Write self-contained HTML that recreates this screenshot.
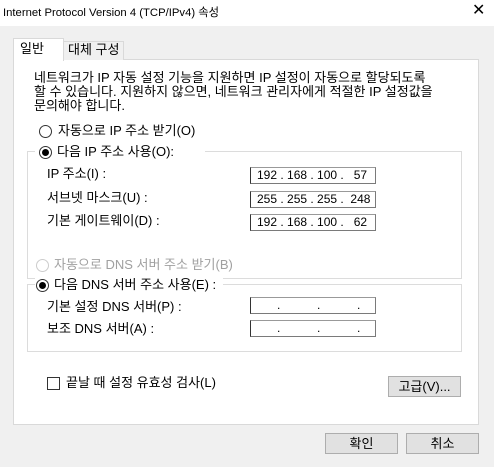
<!DOCTYPE html>
<html><head><meta charset="utf-8"><style>
*{box-sizing:border-box;margin:0;padding:0}
body{width:494px;height:467px;background:#f0f0f0;font-family:"Liberation Sans","Noto Sans CJK KR",sans-serif;font-size:13px;color:#000;position:relative;overflow:hidden}
.a{position:absolute;white-space:nowrap;line-height:14px}
.title{position:absolute;left:0;top:0;width:494px;height:26px;background:#fff}
.panel{position:absolute;left:13px;top:59px;width:466px;height:366px;background:#fff;border:1px solid #d9d9d9}
.grp{position:absolute;border:1px solid #dcdcdc}
.inp{position:absolute;width:126px;height:17px;background:#fff;border:1px solid #7a7a7a;border-left-color:#333;border-top-color:#999;font-size:12px;line-height:15px;padding-left:6px}
.rad{position:absolute;width:13px;height:13px;border:1px solid #333;border-radius:50%;background:#fff}
.rad.on::after{content:"";position:absolute;left:2px;top:2px;width:7px;height:7px;border-radius:50%;background:#000}
.btn{position:absolute;height:21px;background:#e1e1e1;border:1px solid #adadad;text-align:center;line-height:19px}
</style></head><body>
<div class="title"></div>
<div class="a" style="left:3px;top:6px;font-size:11.3px">Internet Protocol Version 4 (TCP/IPv4) 속성</div>
<div class="a" style="left:472px;top:4px;font-size:16px;font-weight:300">✕</div>
<div class="panel"></div>
<div class="a" style="left:63px;top:41px;width:61px;height:19px;background:#f0f0f0;border:1px solid #d9d9d9;border-bottom:none"></div>
<div class="a" style="left:68px;top:43px">대체 구성</div>
<div class="a" style="left:13px;top:38px;width:51px;height:23px;background:#fff;border:1px solid #d9d9d9;border-bottom:none"></div>
<div class="a" style="left:20px;top:42px">일반</div>
<div class="a" style="left:34px;top:71px;line-height:14px">네트워크가 IP 자동 설정 기능을 지원하면 IP 설정이 자동으로 할당되도록<br>할 수 있습니다. 지원하지 않으면, 네트워크 관리자에게 적절한 IP 설정값을<br>문의해야 합니다.</div>
<div class="rad" style="left:39px;top:125px"></div>
<div class="a" style="left:58px;top:124px">자동으로 IP 주소 받기(O)</div>
<div class="grp" style="left:27px;top:151px;width:435px;height:128px"></div>
<div class="a" style="left:35px;top:145px;width:170px;height:14px;background:#fff"></div>
<div class="rad on" style="left:39px;top:146px"></div>
<div class="a" style="left:57px;top:145px">다음 IP 주소 사용(O):</div>
<div class="a" style="left:47px;top:167px">IP 주소(I) :</div>
<div class="a" style="left:47px;top:191px">서브넷 마스크(U) :</div>
<div class="a" style="left:47px;top:214px">기본 게이트웨이(D) :</div>
<div class="inp" style="left:250px;top:167px">192 . 168 . 100 .&nbsp;&nbsp; 57</div>
<div class="inp" style="left:250px;top:191px">255 . 255 . 255 .&nbsp; 248</div>
<div class="inp" style="left:250px;top:214px">192 . 168 . 100 .&nbsp;&nbsp; 62</div>
<div class="rad" style="left:36px;top:259px;border-color:#ccc"></div>
<div class="a" style="left:54px;top:258px;color:#a0a0a0">자동으로 DNS 서버 주소 받기(B)</div>
<div class="grp" style="left:27px;top:284px;width:435px;height:68px"></div>
<div class="a" style="left:35px;top:278px;width:188px;height:14px;background:#fff"></div>
<div class="rad on" style="left:36px;top:279px"></div>
<div class="a" style="left:54px;top:278px">다음 DNS 서버 주소 사용(E) :</div>
<div class="a" style="left:47px;top:300px">기본 설정 DNS 서버(P) :</div>
<div class="a" style="left:47px;top:322px">보조 DNS 서버(A) :</div>
<div class="inp" style="left:250px;top:297px;padding-left:26px">.&nbsp;&nbsp;&nbsp;&nbsp;&nbsp;&nbsp;&nbsp;&nbsp;&nbsp;&nbsp;&nbsp;.&nbsp;&nbsp;&nbsp;&nbsp;&nbsp;&nbsp;&nbsp;&nbsp;&nbsp;&nbsp;&nbsp;.</div>
<div class="inp" style="left:250px;top:320px;padding-left:26px">.&nbsp;&nbsp;&nbsp;&nbsp;&nbsp;&nbsp;&nbsp;&nbsp;&nbsp;&nbsp;&nbsp;.&nbsp;&nbsp;&nbsp;&nbsp;&nbsp;&nbsp;&nbsp;&nbsp;&nbsp;&nbsp;&nbsp;.</div>
<div class="a" style="left:47px;top:377px;width:13px;height:13px;border:1px solid #333;background:#fff"></div>
<div class="a" style="left:66px;top:376px">끝날 때 설정 유효성 검사(L)</div>
<div class="btn" style="left:388px;top:376px;width:73px">고급(V)...</div>
<div class="btn" style="left:325px;top:433px;width:73px">확인</div>
<div class="btn" style="left:406px;top:433px;width:73px">취소</div>
</body></html>
